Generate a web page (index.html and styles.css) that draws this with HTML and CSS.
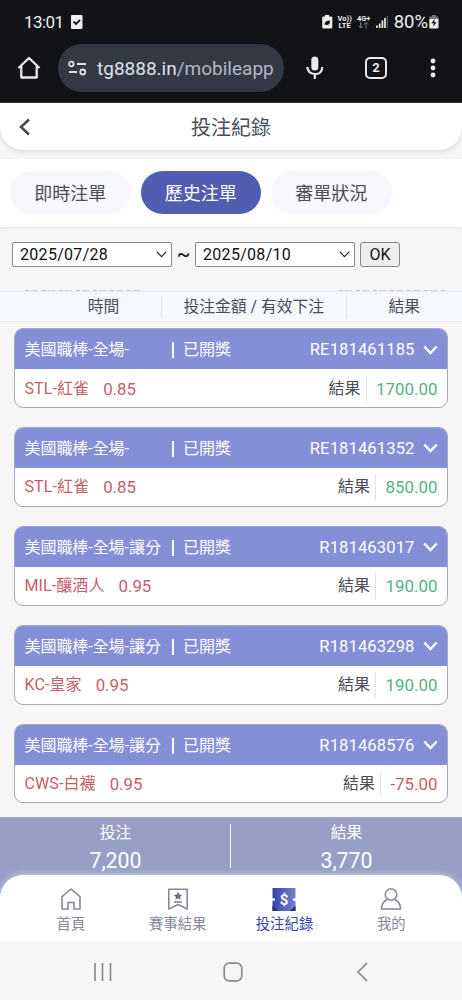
FILE: index.html
```html
<!DOCTYPE html>
<html lang="zh-Hant">
<head>
<meta charset="utf-8">
<title>投注紀錄</title>
<link rel="stylesheet" href="styles.css">
</head>
<body>
<div class="phone">
  <div class="status">
    <span class="clock">13:01</span>
    <svg class="st-check" width="12" height="14" viewBox="0 0 12 14"><rect width="11.5" height="14" rx="1" fill="#eee"/><path d="M2.5 6.5l2.5 2.5 4-4" fill="none" stroke="#15161a" stroke-width="1.8"/></svg>
    <div class="st-right">
      <svg class="st-leaf" width="11" height="14" viewBox="0 0 11 14"><path d="M3 0h4v1.5h2q1.3 0 1.3 1.3v9.4q0 1.3-1.3 1.3H1.500q-1.300 0-1.300-1.300V2.800q0-1.300 1.300-1.300H3z" fill="#eee"/><path d="M2.500 9.500q0-4 5.500-4 .3 4.500-3.500 4.500M2.500 11l3-3" fill="#15161a"/></svg>
      <div class="mini"><b>Vo))</b><b>LTE</b></div>
      <div class="mini net"><b>4G+</b><svg width="11" height="7" viewBox="0 0 11 7"><path d="M2.700 0v6M.7 4l2 2 2-2M8 6.500v-6M6 2.500l2-2 2 2" fill="none" stroke="#85868a"/></svg></div>
      <svg class="st-signal" width="12" height="12" viewBox="0 0 12 12"><path d="M1 12V9.500M3.700 12V7.500M6.400 12V4.500M9 12V2" stroke="#eee" stroke-width="1.700"/><path d="M11.300 12V0" stroke="#66676b" stroke-width="1.200"/></svg>
      <span class="percent">80%</span>
      <svg class="st-bat" width="10" height="14" viewBox="0 0 10 14"><path d="M3 0h4v1.500h1.500q1 0 1 1V4H.3V2.500q0-1 1-1H3z" fill="#77787c"/><path d="M.3 4h9.200v8.300q0 1.200-1.200 1.200H1.500q-1.200 0-1.200-1.200z" fill="#eee"/><path d="M5.800 4L2.300 8.300h2.300L4.200 11.500l3.500-4.300H5.400z" fill="#15161a"/></svg>
    </div>
  </div>
  <div class="browser">
    <svg class="b-home" width="24" height="24" viewBox="0 0 24 24"><path d="M1.500 12L12 2l10.500 10M4.300 10v11.500h15.400V10" fill="none" stroke="#e8e9ed" stroke-width="2.300" stroke-linejoin="round"/></svg>
    <div class="url">
      <svg width="19" height="16" viewBox="0 0 19 16" fill="none" stroke="#dfe1ea" stroke-width="1.800"><circle cx="3.300" cy="4" r="2.300"/><path d="M9 4h9M1 12h8"/><circle cx="14.800" cy="12" r="2.500"/></svg>
      <span>tg8888.in<i>/mobileapp</i></span>
    </div>
    <svg class="b-mic" width="18" height="24" viewBox="0 0 18 24"><rect x="5.300" y="0.500" width="7" height="14" rx="3.500" fill="#e8e9ed"/><path d="M1.300 11q.5 6.500 7.500 7t7.500-7M8.800 18v5" fill="none" stroke="#e8e9ed" stroke-width="2.200"/></svg>
    <div class="tabcount">2</div>
    <svg class="b-dots" width="6" height="20" viewBox="0 0 6 20" fill="#e8e9ed"><circle cx="3" cy="3" r="2.400"/><circle cx="3" cy="10" r="2.400"/><circle cx="3" cy="17" r="2.400"/></svg>
  </div>
  <header class="title">
    <svg width="12" height="18" viewBox="0 0 12 18"><path d="M10 1.500L2 9l8 7.500" fill="none" stroke="#484a55" stroke-width="2.600"/></svg>
    <h1>投注紀錄</h1>
  </header>
  <nav class="tabs"><span>即時注單</span><span class="on">歷史注單</span><span>審單狀況</span></nav>
  <div class="dates">
    <div class="select">2025/07/28<svg width="11" height="7" viewBox="0 0 11 7"><path d="M.7.700l4.800 5 4.800-5" fill="none" stroke="#222" stroke-width="1.100"/></svg></div>
    <span class="tilde">~</span>
    <div class="select">2025/08/10<svg width="11" height="7" viewBox="0 0 11 7"><path d="M.7.700l4.800 5 4.800-5" fill="none" stroke="#222" stroke-width="1.100"/></svg></div>
    <button>OK</button>
  </div>
  <div class="scrolled"><i class="left"></i><i class="right"></i></div>
  <div class="columns"><span>時間</span><span>投注金額 / 有效下注</span><span>結果</span></div>
  <main class="list">
    <article class="card">
      <div class="head"><span class="game">美國職棒-全場-</span><span class="state">已開獎</span><span class="no">RE181461185</span><svg class="chev" width="15" height="10" viewBox="0 0 15 10"><path d="M1.300 1.500l6.200 6.500 6.200-6.500"/></svg></div>
      <div class="body"><span class="team">STL-紅雀</span><span class="odds">0.85</span><span class="label">結果</span><span class="amount">1700.00</span></div>
    </article>
    <article class="card">
      <div class="head"><span class="game">美國職棒-全場-</span><span class="state">已開獎</span><span class="no">RE181461352</span><svg class="chev" width="15" height="10" viewBox="0 0 15 10"><path d="M1.300 1.500l6.200 6.500 6.200-6.500"/></svg></div>
      <div class="body"><span class="team">STL-紅雀</span><span class="odds">0.85</span><span class="label">結果</span><span class="amount">850.00</span></div>
    </article>
    <article class="card">
      <div class="head"><span class="game">美國職棒-全場-讓分</span><span class="state">已開獎</span><span class="no">R181463017</span><svg class="chev" width="15" height="10" viewBox="0 0 15 10"><path d="M1.300 1.500l6.200 6.500 6.200-6.500"/></svg></div>
      <div class="body"><span class="team">MIL-釀酒人</span><span class="odds">0.95</span><span class="label">結果</span><span class="amount">190.00</span></div>
    </article>
    <article class="card">
      <div class="head"><span class="game">美國職棒-全場-讓分</span><span class="state">已開獎</span><span class="no">R181463298</span><svg class="chev" width="15" height="10" viewBox="0 0 15 10"><path d="M1.300 1.500l6.200 6.500 6.200-6.500"/></svg></div>
      <div class="body"><span class="team">KC-皇家</span><span class="odds">0.95</span><span class="label">結果</span><span class="amount">190.00</span></div>
    </article>
    <article class="card">
      <div class="head"><span class="game">美國職棒-全場-讓分</span><span class="state">已開獎</span><span class="no">R181468576</span><svg class="chev" width="15" height="10" viewBox="0 0 15 10"><path d="M1.300 1.500l6.200 6.500 6.200-6.500"/></svg></div>
      <div class="body"><span class="team">CWS-白襪</span><span class="odds">0.95</span><span class="label">結果</span><span class="amount loss">-75.00</span></div>
    </article>
  </main>
  <section class="summary">
    <div><span>投注</span><strong>7,200</strong></div>
    <div><span>結果</span><strong>3,770</strong></div>
  </section>
  <footer class="menu">
    <a><svg width="24" height="24" viewBox="0 0 24 24" fill="none" stroke="#858899" stroke-width="1.600" stroke-linejoin="round"><path d="M3 22V9.700L12 2l9 7.700V22h-6v-6.500H9V22z"/></svg>首頁</a>
    <a><svg width="24" height="24" viewBox="0 0 24 24" fill="none" stroke="#858899" stroke-width="1.600" stroke-linejoin="round"><path d="M2.800 2.200h18.400V22L12 17.500 2.800 22z"/><path d="M8 15h8"/><path d="M12 4.800l1.300 2.800 3 .3-2.300 2 .7 3-2.700-1.600-2.700 1.600.7-3-2.300-2 3-.3z" fill="#6c7087" stroke="none"/></svg>賽事結果</a>
    <a class="on"><svg width="24" height="24" viewBox="0 0 24 24"><defs><linearGradient id="ticket"><stop offset="0" stop-color="#3444a5"/><stop offset="1" stop-color="#7580d2"/></linearGradient></defs><path d="M.5 1h23v23H.5z" fill="url(#ticket)"/><path d="M.5 18.500V24H6zM23.500 18.500V24H18z" fill="#252d67"/><path d="M0 11.200h1.800a1.300 1.300 0 010 2.600H0zM24 11.200h-1.800a1.300 1.300 0 000 2.600H24z" fill="#fff"/><text x="12" y="17.500" text-anchor="middle" class="dollar">$</text></svg>投注紀錄</a>
    <a><svg width="24" height="24" viewBox="0 0 24 24" fill="none" stroke="#858899" stroke-width="1.600" stroke-linejoin="round"><circle cx="12" cy="7.500" r="5.700"/><path d="M8 12.500Q3 15 2.300 22h19.400Q21 15 16 12.500"/></svg>我的</a>
  </footer>
  <div class="system">
    <svg width="20" height="20" viewBox="0 0 20 20"><path d="M2 1v18M9.500 1v18M17.500 1v18"/></svg>
    <svg width="20" height="20" viewBox="0 0 20 20"><rect x="1.200" y="1.200" width="17.600" height="17.600" rx="5"/></svg>
    <svg width="20" height="20" viewBox="0 0 20 20"><path d="M14 1L5 10l9 9"/></svg>
  </div>
</div>
</body>
</html>
```
FILE: styles.css
```css
* { box-sizing: border-box; }
body { margin: 0; background: #f6f6f6; font-family: Roboto, "Noto Sans CJK TC", sans-serif; color: #4b4d58; }
svg { display: block; flex: none; }
.phone { width: 462px; height: 1000px; overflow: hidden; display: flex; flex-direction: column; }
.phone > * { flex: none; }
.status { height: 44px; background: #121317; color: #eee; display: flex; align-items: center; padding: 0 23px 0 24px; }
.clock { font-size: 17px; width: 47px; letter-spacing: -.6px; }
.st-right { margin-left: auto; display: flex; align-items: center; }
.mini { width: 14px; margin-left: 5px; font-size: 7.500px; line-height: 7px; display: flex; flex-direction: column; align-items: center; white-space: nowrap; }
.mini.net { margin-left: 5px; margin-right: 5px; }
.percent { font-size: 18.500px; line-height: 20px; margin: 0 1px 0 6px; }
.browser { height: 59px; background: #121317; border-bottom: 1px solid #333238; display: flex; align-items: flex-start; }
.b-home { margin: 12px 0 0 17px; }
.url { width: 226px; height: 48px; margin-left: 17px; border-radius: 24px; background: #343744; color: #dfe1ea; display: flex; align-items: center; gap: 10px; padding-left: 10px; font-size: 19px; white-space: nowrap; }
.url i { font-style: normal; color: #b5b8c5; }
.b-mic { margin: 12px 0 0 22px; }
.tabcount { width: 22px; height: 22px; margin: 13px 0 0 41px; border: 2px solid #e8e9ed; border-radius: 5px; color: #e8e9ed; font: 700 13px/18px Roboto, sans-serif; text-align: center; }
.b-dots { margin: 14px 0 0 43px; }
.title { height: 47px; background: #fff; border-radius: 0 0 23px 23px; box-shadow: 0 2px 5px #0000001c; display: flex; align-items: center; padding-left: 19px; }
.title h1 { flex: 1; margin: 0; padding: 2px 31px 0 0; font-size: 20px; font-weight: 400; text-align: center; line-height: 28px; }
.tabs { height: 68px; margin-top: 9px; background: #fff; box-shadow: 0 1px 4px #00000018; display: flex; gap: 10px; padding: 12px 10px; }
.tabs span { width: 120.500px; height: 43px; border-radius: 22px; background: #f7f7fd; font-size: 18px; line-height: 46px; text-align: center; }
.tabs .on { background: #515db0; color: #fff; }
.dates { height: 63px; display: flex; align-items: flex-start; padding: 15px 0 0 12px; color: #111; }
.select { width: 160px; height: 25px; border: 1px solid #85858a; border-radius: 2px; background: #fff; padding: 0 4px 0 7px; font-size: 16px; line-height: 24px; letter-spacing: .3px; display: flex; align-items: center; justify-content: space-between; }
.tilde { width: 23px; font-size: 20px; line-height: 24px; text-align: center; }
.dates button { width: 40px; height: 25px; margin-left: 5px; padding: 0; border: 1px solid #85858a; border-radius: 3px; background: #efefef; color: #111; font: 16px/22px Roboto, sans-serif; }
.scrolled { height: 1px; display: flex; justify-content: space-between; padding: 0 17px 0 25px; }
.scrolled i { height: 1px; background: repeating-linear-gradient(90deg, #c2c3ca 0 4px, transparent 4px 6px, #d0d1d6 6px 13px, transparent 13px 17px); }
.left { width: 119px; }
.right { width: 106px; }
.columns { height: 31px; background: #f5f8ff; border: solid #e8ebf6; border-width: 1px 0; display: flex; align-items: center; padding-top: 1px; font-size: 15.800px; line-height: 22px; text-align: center; }
.columns span:nth-child(1) { width: 161px; padding-left: 46px; }
.columns span:nth-child(2) { width: 185.500px; border: solid #dfe2ed; border-width: 0 1px; }
.columns span:nth-child(3) { flex: 1; }
.list { height: 495px; padding: 6px 14px 0; display: flex; flex-direction: column; gap: 19px; }
.card { height: 79.900px; flex: none; border: 1px solid #a4a8c7; border-radius: 9px; background: #fff; overflow: hidden; }
.head { height: 40px; background: #838fd6; color: #fff; display: flex; align-items: center; padding: 2px 9px 0 9.500px; font-size: 16px; line-height: 24px; white-space: nowrap; }
.game { width: 147px; letter-spacing: -.05px; }
.state { display: flex; align-items: center; }
.state::before { content: ""; width: 2.500px; height: 16px; margin-right: 9px; background: #fff; }
.no { margin-left: auto; font-size: 16.600px; letter-spacing: .1px; }
.chev { margin: -1px 0 0 8.500px; }
.chev path { fill: none; stroke: #fff; stroke-width: 2.400; }
.body { height: 38px; display: flex; align-items: center; padding: 1px 9.500px 0 9.500px; font-size: 16px; line-height: 26px; color: #c55e6b; }
.team { letter-spacing: .1px; }
.odds { margin-left: 14px; font-size: 16.800px; }
.label { margin-left: auto; color: #4b4d58; }
.amount { margin-left: 5px; padding-left: 9.500px; border-left: 1px solid #e1e2ea; color: #57b184; font-size: 16.900px; }
.amount.loss { color: #c55e6b; }
.summary { height: 83px; background: #979fc6; color: #fff; display: grid; grid-template-columns: 1fr 1fr; padding-top: 2px; }
.summary div { height: 54px; text-align: center; display: flex; flex-direction: column; }
.summary div + div { position: relative; }
.summary div + div::before { content: ""; position: absolute; left: -1px; top: 5px; width: 1px; height: 44px; background: #fff; }
.summary span { font-size: 15.800px; line-height: 28px; }
.summary strong { font-size: 21.300px; font-weight: 400; line-height: 27px; }
.menu { height: 67px; margin-top: -25px; background: #fff; border-radius: 23px 23px 0 0; box-shadow: 0 -1px 6px #ffffff70; position: relative; display: grid; grid-template-columns: repeat(4, 106.800px); padding: 11.500px 17px 0 17.500px; }
.menu a { display: flex; flex-direction: column; align-items: center; font-size: 14.400px; line-height: 27px; color: #858899; }
.menu .on { color: #3948a8; }
.dollar { font: 700 15px Roboto, sans-serif; fill: #fff; }
.system { height: 58px; background: #f6f6f6; display: flex; justify-content: space-between; align-items: center; padding: 1px 89px 0 93px; }
.system svg { fill: none; stroke: #8b8b8d; stroke-width: 1.700; }
```
